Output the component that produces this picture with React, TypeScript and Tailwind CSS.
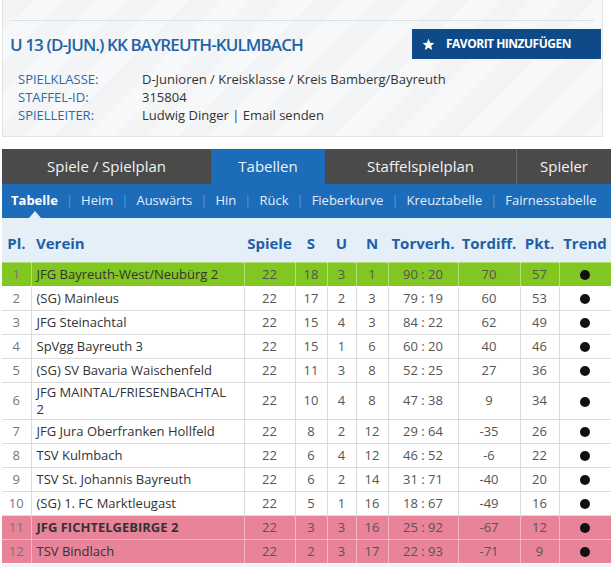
const rows: [number, string, number, number, number, number, string, number, number][] = [
  [1, "JFG Bayreuth-West/Neubürg 2", 22, 18, 3, 1, "90 : 20", 70, 57],
  [2, "(SG) Mainleus", 22, 17, 2, 3, "79 : 19", 60, 53],
  [3, "JFG Steinachtal", 22, 15, 4, 3, "84 : 22", 62, 49],
  [4, "SpVgg Bayreuth 3", 22, 15, 1, 6, "60 : 20", 40, 46],
  [5, "(SG) SV Bavaria Waischenfeld", 22, 11, 3, 8, "52 : 25", 27, 36],
  [6, "JFG MAINTAL/FRIESENBACHTAL 2", 22, 10, 4, 8, "47 : 38", 9, 34],
  [7, "JFG Jura Oberfranken Hollfeld", 22, 8, 2, 12, "29 : 64", -35, 26],
  [8, "TSV Kulmbach", 22, 6, 4, 12, "46 : 52", -6, 22],
  [9, "TSV St. Johannis Bayreuth", 22, 6, 2, 14, "31 : 71", -40, 20],
  [10, "(SG) 1. FC Marktleugast", 22, 5, 1, 16, "18 : 67", -49, 16],
  [11, "JFG FICHTELGEBIRGE 2", 22, 3, 3, 16, "25 : 92", -67, 12],
  [12, "TSV Bindlach", 22, 2, 3, 17, "22 : 93", -71, 9],
];

const subnav = ["Heim", "Auswärts", "Hin", "Rück", "Fieberkurve", "Kreuztabelle", "Fairnesstabelle"];

const App = () => {
  return (
    <div className="w-[615px] h-[567px] overflow-hidden bg-white font-['Open_Sans',sans-serif] text-[#333]">
      {/* Kopfbereich */}
      <div className="ml-[2px] w-[601px] border-r border-b border-l border-[#e2e4e6] bg-[repeating-linear-gradient(135deg,#f3f4f5_0px,#f3f4f5_22px,#f7f8f9_22px,#f7f8f9_44px)] pt-[20px] pb-[12px]">
        <div className="mx-[8px] border-t border-[#dcdfe2]" />
        <div className="mt-[8px] flex h-[30px] items-center justify-between pl-[7px] pr-[1px]">
          <h1 className="pt-px text-[17px] font-semibold tracking-[-0.9px] text-[#1f63a6]">U 13 (D-JUN.) KK BAYREUTH-KULMBACH</h1>
          <button className="flex h-[30px] w-[189px] items-center bg-[#0f4a88] pl-[10px] text-white">
            <svg width="13" height="13" viewBox="0 0 24 24" className="mr-[11px]">
              <path fill="#fff" d="M12 1.5l3.1 7.1 7.7.7-5.8 5.1 1.7 7.6L12 18l-6.7 4 1.7-7.6L1.2 9.3l7.7-.7z" />
            </svg>
            <span className="text-[12px] font-bold tracking-[-0.5px]">FAVORIT HINZUFÜGEN</span>
          </button>
        </div>
        <div className="mt-[11px] pl-[15px] text-[13px] leading-[18px]">
          <div className="flex">
            <span className="w-[124px] text-[#2a6aad]">SPIELKLASSE:</span>
            <span>D-Junioren / Kreisklasse / Kreis Bamberg/Bayreuth</span>
          </div>
          <div className="flex">
            <span className="w-[124px] text-[#2a6aad]">STAFFEL-ID:</span>
            <span>315804</span>
          </div>
          <div className="flex">
            <span className="w-[124px] text-[#2a6aad]">SPIELLEITER:</span>
            <span>Ludwig Dinger | Email senden</span>
          </div>
        </div>
      </div>

      <div className="mt-[12px] ml-[2px] w-[609px]">
        {/* Reiter */}
        <div className="flex h-[35px] bg-[#4a4a4a] text-[15px] text-[#f2f2f2]">
          <div className="flex w-[209px] items-center justify-center">Spiele / Spielplan</div>
          <div className="flex w-[114px] items-center justify-center bg-[#1c6cb9]">Tabellen</div>
          <div className="flex w-[191px] items-center justify-center">Staffelspielplan</div>
          <div className="flex flex-1 items-center justify-center border-l border-[#6a6a6a]">Spieler</div>
        </div>

        {/* Unternavigation */}
        <div className="relative flex h-[34px] items-center bg-[#1c6cb9] pl-[9px] text-[13px] text-[#e3eef9]">
          <span className="font-bold text-white">Tabelle</span>
          {subnav.map((s) => (
            <span key={s} className="flex items-center">
              <span className="mx-[8px] text-[#5b9ad6]">|</span>
              <span>{s}</span>
            </span>
          ))}
          <span className="absolute bottom-0 left-[27px] h-0 w-0 border-x-[6px] border-b-[7px] border-x-transparent border-b-[#e5eff8]" />
        </div>

        {/* Tabelle */}
        <table className="w-[609px] table-fixed border-collapse text-[13px]">
          <colgroup>
            <col className="w-[29px]" />
            <col className="w-[213px]" />
            <col className="w-[51px]" />
            <col className="w-[32px]" />
            <col className="w-[29px]" />
            <col className="w-[32px]" />
            <col className="w-[70px]" />
            <col className="w-[62px]" />
            <col className="w-[39px]" />
            <col className="w-[52px]" />
          </colgroup>
          <thead>
            <tr className="h-[44px] bg-[#e5eff8] text-[15px] font-bold text-[#1f5fa5]">
              <th className="pt-[7px] text-center">Pl.</th>
              <th className="pt-[7px] pl-[5px] text-left">Verein</th>
              <th className="pt-[7px] text-center">Spiele</th>
              <th className="pt-[7px] text-center">S</th>
              <th className="pt-[7px] text-center">U</th>
              <th className="pt-[7px] text-center">N</th>
              <th className="pt-[7px] text-center">Torverh.</th>
              <th className="pt-[7px] text-center">Tordiff.</th>
              <th className="pt-[7px] text-center">Pkt.</th>
              <th className="pt-[7px] text-center">Trend</th>
            </tr>
          </thead>
          <tbody>
            {rows.map((r) => {
              const green = r[0] === 1;
              const pink = r[0] >= 11;
              const rowCls = green ? "bg-[#82c622]" : pink ? "bg-[#e8839a]" : "bg-white";
              const bc = green || pink ? "border-[#ffffff66]" : "border-[#dcdcdc]";
              const cell = `h-[24px] py-px leading-[17px] text-center border ${bc}`;
              return (
                <tr key={r[0]} className={`${rowCls} ${r[0] === 11 ? "font-bold" : ""}`}>
                  <td className={`${cell} border-l-0 font-normal text-[#777]`}>{r[0]}</td>
                  <td className={`${cell} pl-[5px] pr-[14px] text-left text-[#333]`}>{r[1]}</td>
                  <td className={`${cell} font-normal text-[#555]`}>{r[2]}</td>
                  <td className={`${cell} font-normal text-[#555]`}>{r[3]}</td>
                  <td className={`${cell} font-normal text-[#555]`}>{r[4]}</td>
                  <td className={`${cell} font-normal text-[#555]`}>{r[5]}</td>
                  <td className={`${cell} font-normal text-[#555]`}>{r[6]}</td>
                  <td className={`${cell} font-normal text-[#555]`}>{r[7]}</td>
                  <td className={`${cell} font-normal text-[#555]`}>{r[8]}</td>
                  <td className={`${cell} border-r-0`}>
                    <span className="inline-block h-[10px] w-[10px] rounded-full bg-[#111] align-middle" />
                  </td>
                </tr>
              );
            })}
          </tbody>
        </table>
        <div className="h-[4px] bg-[#eef4fa]" />
      </div>
    </div>
  );
};

export default App;
